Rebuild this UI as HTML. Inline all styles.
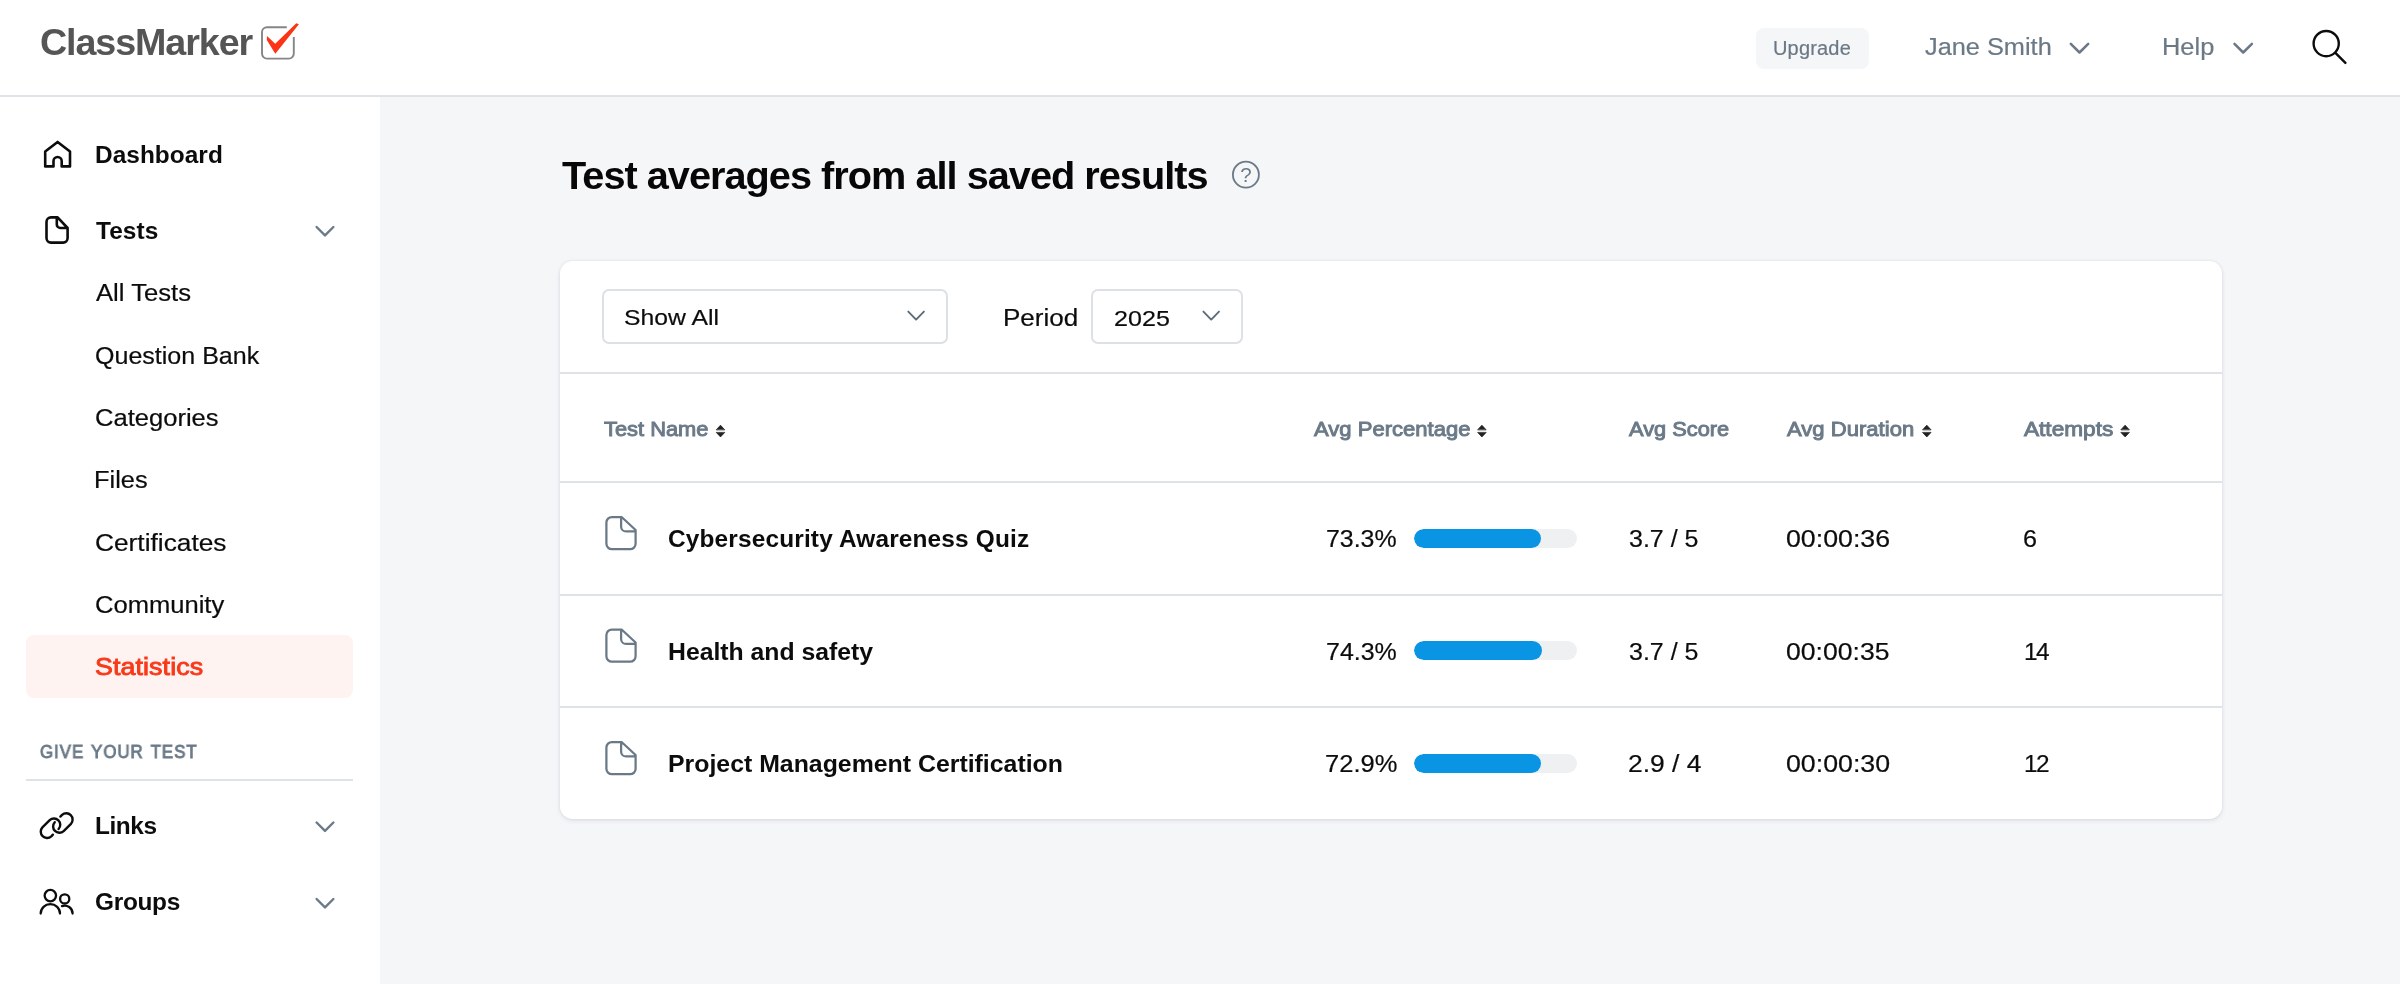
<!DOCTYPE html>
<html lang="en">
<head>
<meta charset="utf-8">
<title>ClassMarker - Statistics</title>
<style>
*{box-sizing:border-box;margin:0;padding:0}
html,body{width:2400px;height:984px;overflow:hidden}
body{font-family:"Liberation Sans",sans-serif;background:#f5f6f8;color:#0c0c0c;position:relative}
.t{position:absolute;white-space:nowrap;line-height:1;will-change:transform}
.b{position:absolute}
#hdr{left:0;top:0;width:2400px;height:97px;background:#fff;border-bottom:2px solid #dfe3e7}
#side{left:0;top:97px;width:380px;height:887px;background:#fff}
#upgb{left:1756px;top:28px;width:113px;height:41px;background:#f5f6f8;border-radius:8px}
#act{left:25.5px;top:635px;width:327px;height:62.5px;background:#fff3f1;border-radius:8px}
#sdiv{left:25.5px;top:778.7px;width:327px;height:2px;background:#dfe3e7}
#card{left:560.3px;top:261.3px;width:1662px;height:557.4px;background:#fff;border-radius:12.5px;box-shadow:0 0 3px rgba(40,50,90,.10),0 2px 5px rgba(40,50,90,.09)}
.hr{left:560.3px;width:1662px;height:2px;background:#dfe3e7}
.sel{height:55px;top:289.2px;border:2px solid #dce1e6;border-radius:7px;background:#fff}
.bar{left:1414.3px;width:163px;height:19.2px;border-radius:10px;background:#eef0f2;overflow:hidden}
.bar i{position:absolute;left:0;top:0;height:100%;border-radius:10px;background:#0a94e4}
svg#ic{position:absolute;left:0;top:0;width:2400px;height:984px;pointer-events:none;will-change:transform}
#logo{left:40.25px;top:24.00px;font-size:37.7px;font-weight:700;color:#555555;letter-spacing:-1.101px;}
#upg{left:1772.85px;top:38.25px;font-size:20px;font-weight:400;color:#6b7885;letter-spacing:0.176px;-webkit-text-stroke:0.2px #6b7885;}
#jane{left:1925.10px;top:35.25px;font-size:24.4px;font-weight:400;color:#6b7885;transform:scaleX(1.0386);transform-origin:0 0;-webkit-text-stroke:0.2px #6b7885;}
#help{left:2162.02px;top:35.00px;font-size:24.4px;font-weight:400;color:#6b7885;transform:scaleX(1.0419);transform-origin:0 0;-webkit-text-stroke:0.2px #6b7885;}
#n1{left:94.80px;top:142.50px;font-size:24.4px;font-weight:700;color:#0c0c0c;letter-spacing:0.050px;}
#n2{left:95.80px;top:218.70px;font-size:24.4px;font-weight:700;color:#0c0c0c;letter-spacing:0.090px;}
#s1{left:95.91px;top:281.20px;font-size:24.4px;font-weight:400;color:#0c0c0c;transform:scaleX(1.0516);transform-origin:0 0;-webkit-text-stroke:0.2px #0c0c0c;}
#s2{left:94.88px;top:343.70px;font-size:24.4px;font-weight:400;color:#0c0c0c;transform:scaleX(1.0263);transform-origin:0 0;-webkit-text-stroke:0.2px #0c0c0c;}
#s3{left:94.86px;top:406.20px;font-size:24.4px;font-weight:400;color:#0c0c0c;transform:scaleX(1.0474);transform-origin:0 0;-webkit-text-stroke:0.2px #0c0c0c;}
#s4{left:94.32px;top:468.30px;font-size:24.4px;font-weight:400;color:#0c0c0c;transform:scaleX(1.0404);transform-origin:0 0;-webkit-text-stroke:0.2px #0c0c0c;}
#s5{left:94.83px;top:530.60px;font-size:24.4px;font-weight:400;color:#0c0c0c;transform:scaleX(1.0777);transform-origin:0 0;-webkit-text-stroke:0.2px #0c0c0c;}
#s6{left:94.86px;top:592.90px;font-size:24.4px;font-weight:400;color:#0c0c0c;transform:scaleX(1.0475);transform-origin:0 0;-webkit-text-stroke:0.2px #0c0c0c;}
#s7{left:94.89px;top:655.20px;font-size:24.4px;font-weight:400;color:#f8391a;letter-spacing:0.079px;transform:scaleX(1.1);transform-origin:0 0;-webkit-text-stroke:0.9px #f8391a;}
#sec{left:40.13px;top:743.50px;font-size:17.7px;font-weight:400;color:#6b7a88;letter-spacing:1.072px;transform:scaleX(0.95);transform-origin:0 0;-webkit-text-stroke:0.9px #6b7a88;word-spacing:1.6px;}
#n3{left:94.80px;top:814.20px;font-size:24.4px;font-weight:700;color:#0c0c0c;letter-spacing:-0.410px;}
#n4{left:94.80px;top:890.30px;font-size:24.4px;font-weight:700;color:#0c0c0c;letter-spacing:-0.292px;}
#title{left:562.00px;top:156.20px;font-size:39.7px;font-weight:700;color:#070707;letter-spacing:-0.981px;}
#f1{left:624.32px;top:306.40px;font-size:22.8px;font-weight:400;color:#0c0c0c;transform:scaleX(1.086);transform-origin:0 0;-webkit-text-stroke:0.2px #0c0c0c;}
#f2{left:1002.97px;top:305.50px;font-size:24.4px;font-weight:400;color:#0c0c0c;transform:scaleX(1.0679);transform-origin:0 0;-webkit-text-stroke:0.2px #0c0c0c;}
#f3{left:1114.01px;top:306.50px;font-size:22.8px;font-weight:400;color:#0c0c0c;letter-spacing:0.012px;transform:scaleX(1.1);transform-origin:0 0;-webkit-text-stroke:0.2px #0c0c0c;}
#h1{left:603.79px;top:417.80px;font-size:21px;font-weight:400;color:#6b7a88;transform:scaleX(1.0404);transform-origin:0 0;-webkit-text-stroke:0.95px #6b7a88;}
#h2{left:1313.80px;top:417.80px;font-size:21px;font-weight:400;color:#6b7a88;transform:scaleX(1.0494);transform-origin:0 0;-webkit-text-stroke:0.95px #6b7a88;}
#h3{left:1629.19px;top:417.80px;font-size:21px;font-weight:400;color:#6b7a88;transform:scaleX(1.0385);transform-origin:0 0;-webkit-text-stroke:0.95px #6b7a88;}
#h4{left:1787.20px;top:417.80px;font-size:21px;font-weight:400;color:#6b7a88;transform:scaleX(1.0512);transform-origin:0 0;-webkit-text-stroke:0.95px #6b7a88;}
#h5{left:2023.81px;top:417.80px;font-size:21px;font-weight:400;color:#6b7a88;transform:scaleX(1.0767);transform-origin:0 0;-webkit-text-stroke:0.95px #6b7a88;}
#r1n{left:667.70px;top:527.40px;font-size:24.4px;font-weight:700;color:#0c0c0c;letter-spacing:0.169px;}
#r2n{left:667.68px;top:639.60px;font-size:24.4px;font-weight:700;color:#0c0c0c;transform:scaleX(1.0154);transform-origin:0 0;}
#r3n{left:667.68px;top:752.00px;font-size:24.4px;font-weight:700;color:#0c0c0c;transform:scaleX(1.0189);transform-origin:0 0;}
#r1p{left:1326.28px;top:527.40px;font-size:24.4px;font-weight:400;color:#0c0c0c;transform:scaleX(1.0211);transform-origin:0 0;-webkit-text-stroke:0.2px #0c0c0c;}
#r2p{left:1326.08px;top:639.60px;font-size:24.4px;font-weight:400;color:#0c0c0c;transform:scaleX(1.0241);transform-origin:0 0;-webkit-text-stroke:0.2px #0c0c0c;}
#r3p{left:1324.56px;top:752.00px;font-size:24.4px;font-weight:400;color:#0c0c0c;transform:scaleX(1.0462);transform-origin:0 0;-webkit-text-stroke:0.2px #0c0c0c;}
#r1s{left:1629.30px;top:527.40px;font-size:24.4px;font-weight:400;color:#0c0c0c;transform:scaleX(1.0247);transform-origin:0 0;-webkit-text-stroke:0.2px #0c0c0c;}
#r2s{left:1629.30px;top:639.60px;font-size:24.4px;font-weight:400;color:#0c0c0c;transform:scaleX(1.0247);transform-origin:0 0;-webkit-text-stroke:0.2px #0c0c0c;}
#r3s{left:1628.22px;top:752.00px;font-size:24.4px;font-weight:400;color:#0c0c0c;transform:scaleX(1.0838);transform-origin:0 0;-webkit-text-stroke:0.2px #0c0c0c;}
#r1d{left:1786.41px;top:527.40px;font-size:24.4px;font-weight:400;color:#0c0c0c;transform:scaleX(1.0965);transform-origin:0 0;-webkit-text-stroke:0.2px #0c0c0c;}
#r2d{left:1786.41px;top:639.60px;font-size:24.4px;font-weight:400;color:#0c0c0c;transform:scaleX(1.0901);transform-origin:0 0;-webkit-text-stroke:0.2px #0c0c0c;}
#r3d{left:1786.41px;top:752.00px;font-size:24.4px;font-weight:400;color:#0c0c0c;transform:scaleX(1.0965);transform-origin:0 0;-webkit-text-stroke:0.2px #0c0c0c;}
#r1a{left:2022.77px;top:527.40px;font-size:24.4px;font-weight:400;color:#0c0c0c;transform:scaleX(1.0328);transform-origin:0 0;-webkit-text-stroke:0.2px #0c0c0c;}
#r2a{left:2023.60px;top:639.60px;font-size:24.4px;font-weight:400;color:#0c0c0c;letter-spacing:-1.600px;-webkit-text-stroke:0.2px #0c0c0c;}
#r3a{left:2023.60px;top:752.00px;font-size:24.4px;font-weight:400;color:#0c0c0c;letter-spacing:-1.600px;-webkit-text-stroke:0.2px #0c0c0c;}
</style>
</head>
<body>
<div class="b" id="hdr"></div>
<div class="b" id="side"></div>
<div class="b" id="upgb"></div>
<div class="b" id="act"></div>
<div class="b" id="sdiv"></div>
<div class="b" id="card"></div>
<div class="b sel" style="left:602px;width:346px"></div>
<div class="b sel" style="left:1091.2px;width:151.6px"></div>
<div class="b hr" style="top:372.2px"></div>
<div class="b hr" style="top:481.2px"></div>
<div class="b hr" style="top:593.6px"></div>
<div class="b hr" style="top:705.8px"></div>
<div class="b bar" style="top:528.8px"><i style="width:126.5px"></i></div>
<div class="b bar" style="top:641.1px"><i style="width:128.2px"></i></div>
<div class="b bar" style="top:753.9px"><i style="width:126.4px"></i></div>
<div class="t" id="logo">ClassMarker</div>
<div class="t" id="upg">Upgrade</div>
<div class="t" id="jane">Jane Smith</div>
<div class="t" id="help">Help</div>
<div class="t" id="n1">Dashboard</div>
<div class="t" id="n2">Tests</div>
<div class="t" id="s1">All Tests</div>
<div class="t" id="s2">Question Bank</div>
<div class="t" id="s3">Categories</div>
<div class="t" id="s4">Files</div>
<div class="t" id="s5">Certificates</div>
<div class="t" id="s6">Community</div>
<div class="t" id="s7">Statistics</div>
<div class="t" id="sec">GIVE YOUR TEST</div>
<div class="t" id="n3">Links</div>
<div class="t" id="n4">Groups</div>
<div class="t" id="title">Test averages from all saved results</div>
<div class="t" id="f1">Show All</div>
<div class="t" id="f2">Period</div>
<div class="t" id="f3">2025</div>
<div class="t" id="h1">Test Name</div>
<div class="t" id="h2">Avg Percentage</div>
<div class="t" id="h3">Avg Score</div>
<div class="t" id="h4">Avg Duration</div>
<div class="t" id="h5">Attempts</div>
<div class="t" id="r1n">Cybersecurity Awareness Quiz</div>
<div class="t" id="r2n">Health and safety</div>
<div class="t" id="r3n">Project Management Certification</div>
<div class="t" id="r1p">73.3%</div>
<div class="t" id="r2p">74.3%</div>
<div class="t" id="r3p">72.9%</div>
<div class="t" id="r1s">3.7 / 5</div>
<div class="t" id="r2s">3.7 / 5</div>
<div class="t" id="r3s">2.9 / 4</div>
<div class="t" id="r1d">00:00:36</div>
<div class="t" id="r2d">00:00:35</div>
<div class="t" id="r3d">00:00:30</div>
<div class="t" id="r1a">6</div>
<div class="t" id="r2a">14</div>
<div class="t" id="r3a">12</div>
<svg id="ic" viewBox="0 0 2400 984" fill="none" stroke-linecap="round" stroke-linejoin="round">
<!-- logo checkbox -->
<path d="M286.8 27.2 H267 a5 5 0 0 0 -5 5 V53.6 a5 5 0 0 0 5 5 H288.8 a5 5 0 0 0 5 -5 V37" stroke="#858585" stroke-width="1.9" stroke-linecap="butt"/>
<path d="M267 36 L275.2 43.8 L296.3 23.2 L298.9 24.2 L275.3 53.8 L266.8 40 Z" fill="#fb3415"/>
<!-- header chevrons -->
<g stroke="#6b7885" stroke-width="2.5">
<path d="M2070.8 43.8 L2079.5 52.5 L2088.2 43.8"/>
<path d="M2234.5 43.8 L2243.2 52.5 L2251.9 43.8"/>
</g>
<!-- search -->
<g stroke="#0c0c0c" stroke-width="2.4">
<circle cx="2326.2" cy="43.6" r="12.6"/>
<path d="M2335.4 52.9 L2345.4 62.9"/>
</g>
<!-- sidebar icons -->
<g stroke="#0c0c0c" stroke-width="2.6">
<path d="M53.5 166.4 H45.2 V151.6 L57.6 141.9 L70 151.6 V166.4 H61.7 V161.1 a4.1 4.1 0 0 0 -8.2 0 Z"/>
<path d="M51 217.4 H57.6 L67.6 228 V238.1 a4.5 4.5 0 0 1 -4.5 4.5 H51 a4.5 4.5 0 0 1 -4.5 -4.5 V221.9 a4.5 4.5 0 0 1 4.5 -4.5 Z M56.8 217.4 V224.4 a3.6 3.6 0 0 0 3.6 3.6 H67.6"/>
</g>
<g stroke="#0c0c0c" stroke-width="2.4">
<path d="M52.9 834.7 L51.3 836.3 A6.3 6.3 0 0 1 42.4 827.4 L49.7 820.1 A6.3 6.3 0 0 1 58.6 829"/>
<path d="M60.4 816.6 L62.05 814.95 A6.3 6.3 0 0 1 70.95 823.85 L63.65 831.15 A6.3 6.3 0 0 1 54.75 822.25"/>
</g>
<g stroke="#0c0c0c" stroke-width="2.3">
<circle cx="50.35" cy="895.6" r="5.7"/>
<path d="M40.7 913.5 A9.65 9.4 0 0 1 60 913.5"/>
<circle cx="64.7" cy="898.9" r="4.6"/>
<path d="M62 906.1 A7.9 7.9 0 0 1 72.6 913.5"/>
</g>
<!-- sidebar chevrons -->
<g stroke="#6b7a88" stroke-width="2.4">
<path d="M316.6 227 L325 235.4 L333.4 227"/>
<path d="M316.6 822.5 L325 830.9 L333.4 822.5"/>
<path d="M316.6 899 L325 907.4 L333.4 899"/>
</g>
<!-- select chevrons -->
<g stroke="#5f6c78" stroke-width="1.9">
<path d="M908.3 311.6 L916.1 319.6 L923.9 311.6"/>
<path d="M1203.4 311.6 L1211.2 319.6 L1219 311.6"/>
</g>
<!-- help circle -->
<circle cx="1245.9" cy="174.7" r="13" stroke="#6b7a88" stroke-width="1.8"/>
<text x="1245.9" y="182.4" font-family="Liberation Sans, sans-serif" font-size="20.5" text-anchor="middle" fill="#6b7a88" stroke="none">?</text>
<!-- sort icons -->
<g fill="#222" stroke="#222" stroke-width="0.8">
<path id="so" d="M716.5 429.6 L720.5 425.2 L724.5 429.6 Z M716.5 432.7 L720.5 436.9 L724.5 432.7 Z"/>
<use href="#so" x="761.4"/>
<use href="#so" x="1206.3"/>
<use href="#so" x="1404.6"/>
</g>
<!-- row file icons -->
<g stroke="#6b7885" stroke-width="2.25">
<path id="fi" d="M612 517 H621.6 L635.6 530 V543.7 a5.5 5.5 0 0 1 -5.5 5.5 H611.9 a5.5 5.5 0 0 1 -5.5 -5.5 V522.5 a5.5 5.5 0 0 1 5.5 -5.5 Z M621.1 517 V526.4 a5 5 0 0 0 5 5 H635.6"/>
<use href="#fi" y="112.5"/>
<use href="#fi" y="225"/>
</g>
</svg>
</body>
</html>
